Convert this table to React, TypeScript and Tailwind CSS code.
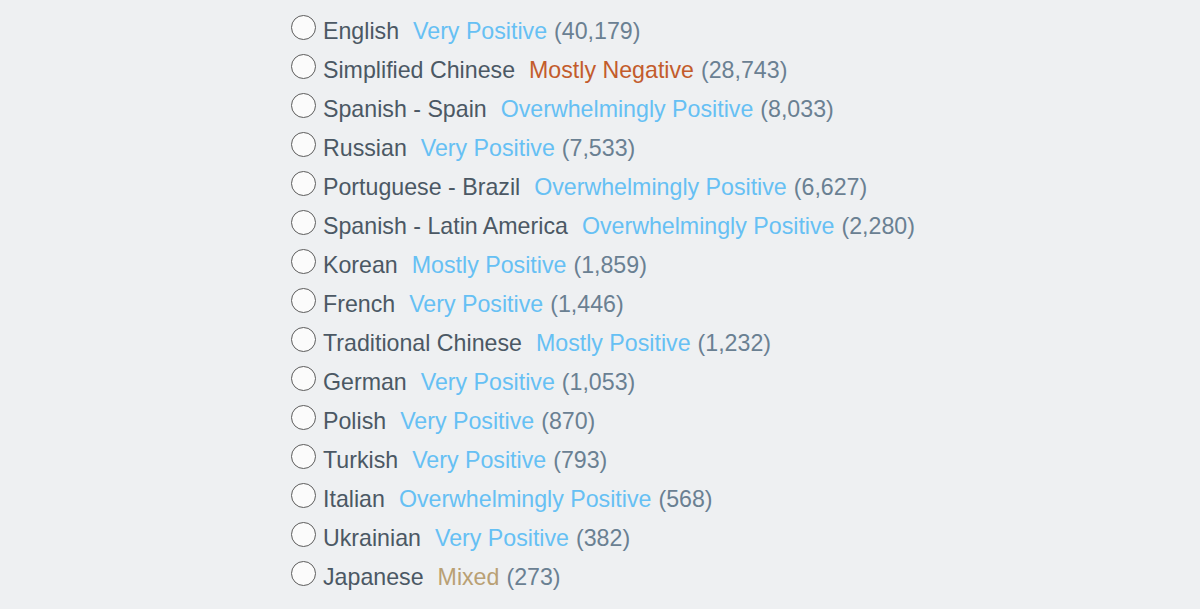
import React from "react";

type Row = { lang: string; summary: string; tone: "pos" | "neg" | "mixed"; count: string };

const rows: Row[] = [
  { lang: "English", summary: "Very Positive", tone: "pos", count: "(40,179)" },
  { lang: "Simplified Chinese", summary: "Mostly Negative", tone: "neg", count: "(28,743)" },
  { lang: "Spanish - Spain", summary: "Overwhelmingly Positive", tone: "pos", count: "(8,033)" },
  { lang: "Russian", summary: "Very Positive", tone: "pos", count: "(7,533)" },
  { lang: "Portuguese - Brazil", summary: "Overwhelmingly Positive", tone: "pos", count: "(6,627)" },
  { lang: "Spanish - Latin America", summary: "Overwhelmingly Positive", tone: "pos", count: "(2,280)" },
  { lang: "Korean", summary: "Mostly Positive", tone: "pos", count: "(1,859)" },
  { lang: "French", summary: "Very Positive", tone: "pos", count: "(1,446)" },
  { lang: "Traditional Chinese", summary: "Mostly Positive", tone: "pos", count: "(1,232)" },
  { lang: "German", summary: "Very Positive", tone: "pos", count: "(1,053)" },
  { lang: "Polish", summary: "Very Positive", tone: "pos", count: "(870)" },
  { lang: "Turkish", summary: "Very Positive", tone: "pos", count: "(793)" },
  { lang: "Italian", summary: "Overwhelmingly Positive", tone: "pos", count: "(568)" },
  { lang: "Ukrainian", summary: "Very Positive", tone: "pos", count: "(382)" },
  { lang: "Japanese", summary: "Mixed", tone: "mixed", count: "(273)" },
];

function toneClass(t: Row["tone"]) {
  if (t === "neg") return "text-[#c35c2c]";
  if (t === "mixed") return "text-[#b9a074]";
  return "text-[#66c0f4]";
}

export default function App() {
  return (
    <div
      className="w-[1200px] h-[609px] bg-[#eef0f2] overflow-hidden"
      style={{ fontFamily: '"Liberation Sans", Arial, sans-serif' }}
    >
      <div className="pl-[291px] pt-[12px] flex flex-col">
        {rows.map((r) => (
          <div key={r.lang} className="flex items-start h-[39px] leading-[39px] text-[23.2px] whitespace-nowrap">
            <div className="mt-[3px] w-[25px] h-[25px] rounded-full border border-[#5c5c5c] bg-[#fbfbfb] shrink-0" />
            <span className="ml-[7px] text-[#4b5864]">{r.lang}</span>
            <span className={`ml-[14px] ${toneClass(r.tone)}`}>{r.summary}</span>
            <span className="ml-[7px] text-[#6a8092]">{r.count}</span>
          </div>
        ))}
      </div>
    </div>
  );
}
